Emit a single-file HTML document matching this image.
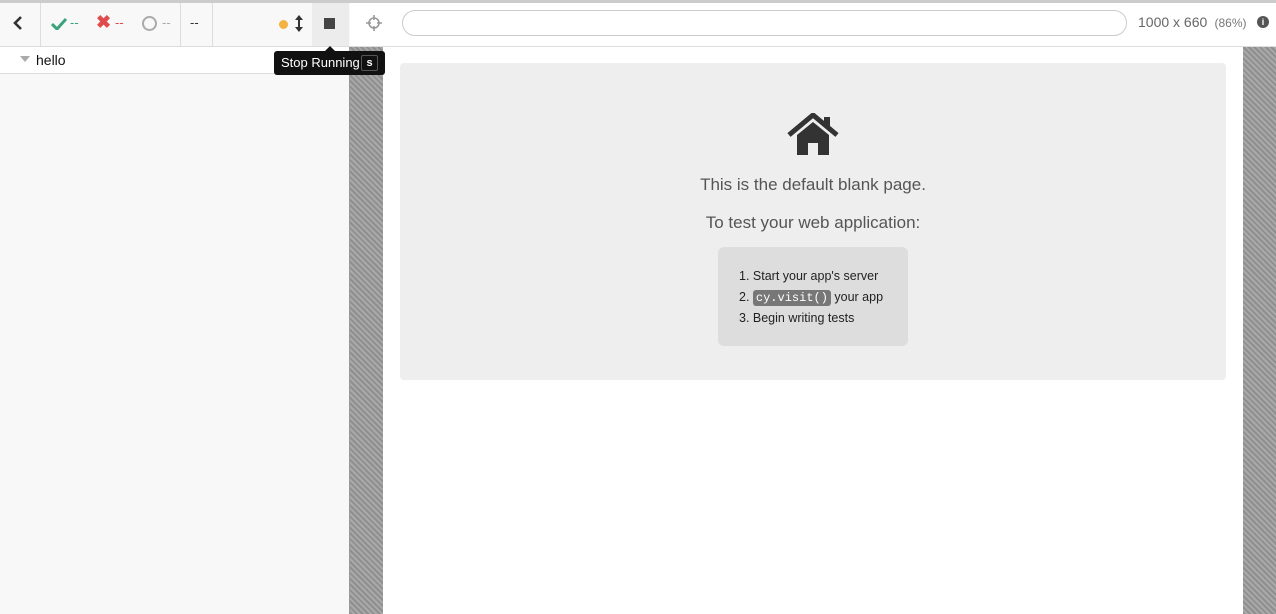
<!DOCTYPE html>
<html><head><style>
*{box-sizing:border-box;margin:0;padding:0}
body{width:1276px;height:614px;overflow:hidden;font-family:"Liberation Sans",sans-serif;background:#fff;position:relative}
.a{position:absolute}
.stripe{background:repeating-linear-gradient(45deg,#8f8f8f 0 2px,#a9a9a9 2px 4px)}
</style></head><body>
<div class="a" style="left:0;top:0;width:1276px;height:3px;background:#ccc"></div>
<div class="a" style="left:0;top:3px;width:350px;height:44px;background:#f8f8f8;border-bottom:1px solid #ddd"></div>
<div class="a" style="left:40px;top:3px;width:1px;height:43px;background:#ddd"></div>
<div class="a" style="left:180px;top:3px;width:1px;height:43px;background:#ddd"></div>
<div class="a" style="left:212px;top:3px;width:1px;height:43px;background:#ddd"></div>
<div class="a" style="left:312px;top:3px;width:37px;height:43px;background:#ececec"></div>
<svg class="a" style="left:12px;top:16px" width="12" height="14"><path d="M9 1 L3 7 L9 13" stroke="#333" stroke-width="2.6" fill="none"/></svg>
<svg class="a" style="left:51px;top:17px" width="16" height="13"><path d="M1 7 L6 12 L15 2" stroke="#3aa37a" stroke-width="3" fill="none"/></svg>
<div class="a" style="left:70px;top:15px;font-size:13px;color:#3aa37a">--</div>
<div class="a" style="left:96px;top:12px;font-size:18px;color:#e04b4b;font-weight:bold">✖</div>
<div class="a" style="left:115px;top:15px;font-size:13px;color:#e04b4b">--</div>
<div class="a" style="left:142px;top:16px;width:15px;height:15px;border:2px solid #aaa;border-radius:50%"></div>
<div class="a" style="left:162px;top:15px;font-size:13px;color:#aaa">--</div>
<div class="a" style="left:190px;top:15px;font-size:13px;color:#333">--</div>
<div class="a" style="left:279px;top:20px;width:9px;height:9px;border-radius:50%;background:#f4b23f"></div>
<svg class="a" style="left:295px;top:15px" width="8" height="17"><path d="M4 2v13" stroke="#333" stroke-width="2"/><path d="M0 5L4 0L8 5ZM0 12L4 17L8 12Z" fill="#333"/></svg>
<div class="a" style="left:324px;top:18px;width:11px;height:11px;background:#444"></div>
<svg class="a" style="left:366px;top:15px" width="16" height="16"><circle cx="8" cy="8" r="5" stroke="#999" stroke-width="1.6" fill="none"/><path d="M8 0v5M8 11v5M0 8h5M11 8h5" stroke="#999" stroke-width="1.6"/></svg>
<div class="a" style="left:350px;top:3px;width:926px;height:44px;background:#fff;z-index:-1"></div>
<div class="a" style="left:402px;top:10px;width:725px;height:26px;border:1px solid #ccc;border-radius:13px"></div>
<div class="a" style="left:1138px;top:14px;font-size:14px;color:#666">1000 x 660 <span style="font-size:12px;color:#777">&nbsp;(86%)</span></div>
<div class="a" style="left:1257px;top:16px;width:12px;height:12px;border-radius:50%;background:#555;color:#fff;font-size:9px;text-align:center;line-height:12px;font-weight:bold">i</div>
<div class="a" style="left:0;top:46px;width:1276px;height:1px;background:#ddd"></div>
<div class="a" style="left:0;top:47px;width:350px;height:27px;background:#fff;border-bottom:1px solid #ddd"></div>
<div class="a" style="left:0;top:74px;width:350px;height:540px;background:#f8f8f8"></div>
<div class="a" style="left:20px;top:56px;width:0;height:0;border-left:5px solid transparent;border-right:5px solid transparent;border-top:6px solid #aaa"></div>
<div class="a" style="left:36px;top:52px;font-size:14px;color:#111">hello</div>
<div class="a stripe" style="left:349px;top:47px;width:34px;height:567px;border-left:1px solid #999"></div>
<div class="a stripe" style="left:1243px;top:47px;width:33px;height:567px"></div>
<div class="a" style="left:400px;top:63px;width:826px;height:317px;background:#eee;border-radius:4px"></div>
<svg class="a" style="left:787px;top:113px" width="52" height="42" viewBox="0 0 52 42"><path d="M2 22 L26 2 L50 22" stroke="#333" stroke-width="5" fill="none"/><path d="M37 4h6v12l-6-5z" fill="#333"/><path d="M10 22 L26 9 L42 22 V42 H31 V30 H21 V42 H10Z" fill="#333"/></svg>
<div class="a" style="left:400px;top:175px;width:826px;text-align:center;font-size:17px;color:#555">This is the default blank page.</div>
<div class="a" style="left:400px;top:213px;width:826px;text-align:center;font-size:17px;color:#555">To test your web application:</div>
<div class="a" style="left:718px;top:247px;width:190px;height:99px;background:#ddd;border-radius:6px"></div>
<div class="a" style="left:739px;top:266px;font-size:12.5px;color:#222;line-height:20.5px;white-space:nowrap">1. Start your app's server<br>2. <span style="background:#777;color:#fff;font-family:'Liberation Mono',monospace;font-size:12px;padding:1px 3px;border-radius:3px">cy.visit()</span> your app<br>3. Begin writing tests</div>
<div class="a" style="left:274px;top:51px;width:111px;height:24px;background:#111;border-radius:3px;color:#fff;font-size:13px;padding:4px 7px;white-space:nowrap">Stop Running</div>
<div class="a" style="left:361px;top:55px;width:17px;height:16px;border:1px solid #555;border-radius:2px;color:#fff;font-size:11px;font-weight:bold;text-align:center;line-height:14px">s</div>
<div class="a" style="left:325px;top:46px;width:0;height:0;border-left:5px solid transparent;border-right:5px solid transparent;border-bottom:5px solid #111"></div>
</body></html>
